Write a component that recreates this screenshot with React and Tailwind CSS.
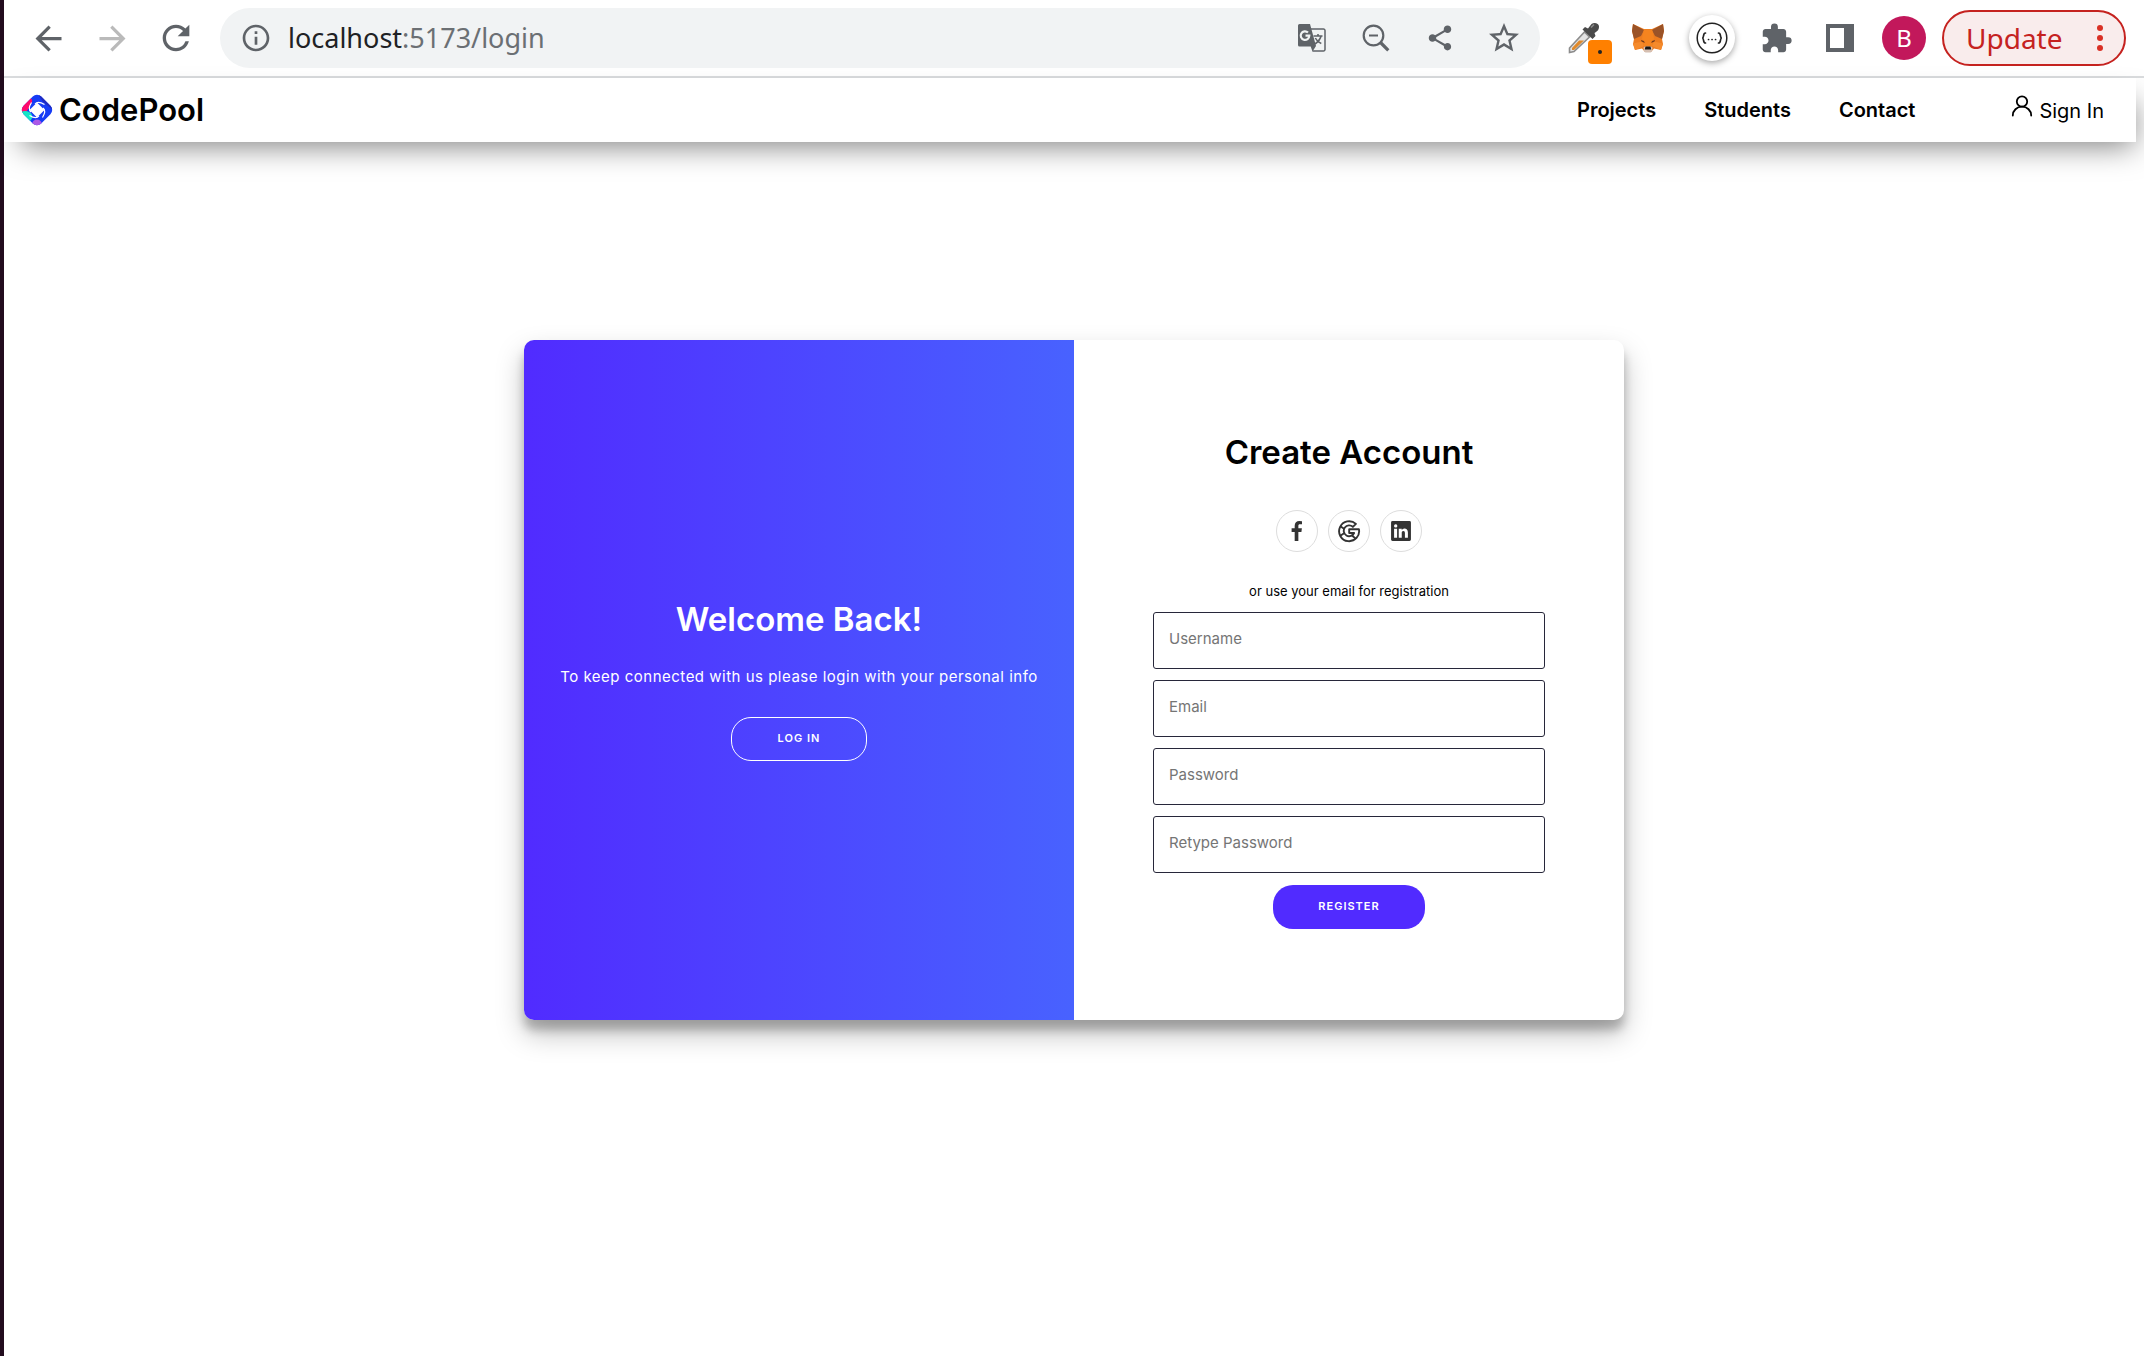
import React from "react";
import {
  MdArrowBack,
  MdArrowForward,
  MdRefresh,
  MdInfoOutline,
  MdShare,
  MdStarBorder,
  MdExtension,
} from "react-icons/md";

function ToolButton({ label, className = "text-[#5f6368]", children }) {
  return (
    <button type="button" aria-label={label} className={`flex h-[60px] w-16 shrink-0 items-center justify-center ${className}`}>
      {children}
    </button>
  );
}

function TranslateIcon() {
  return (
    <svg width="30" height="30" viewBox="0 0 30 30" fill="none">
      <path d="M13 6H26.500a1.500 1.500 0 0 1 1.500 1.500V26.500a1.500 1.500 0 0 1-1.500 1.500H15.500" stroke="#5f6368" strokeWidth="1.500" />
      <path d="M16.500 13h9M21 11v2M24 13c-.6 3-3 5.800-6 8M18.300 15c1.200 2.500 3.500 4.500 6 5.500" stroke="#5f6368" strokeWidth="1.600" />
      <path d="M2.500 1H13l6 22-3.500 5.500-1.800-5H2.500A1.500 1.500 0 0 1 1 22V2.500A1.500 1.500 0 0 1 2.500 1Z" fill="#5f6368" />
      <path d="M11 9.500A4.300 4.300 0 1 0 12.300 12.700H8.500" stroke="#f1f3f4" strokeWidth="2.200" />
    </svg>
  );
}

function ZoomOutIcon() {
  return (
    <svg width="28" height="28" viewBox="0 0 28 28" fill="none" stroke="#5f6368">
      <circle cx="11.500" cy="11.500" r="9.800" strokeWidth="2.200" />
      <path d="M7 11.500h9" strokeWidth="2" />
      <path d="M18.500 18.500 26.300 26.300" strokeWidth="3.200" />
    </svg>
  );
}

function EyedropperIcon() {
  return (
    <svg width="32" height="32" viewBox="0 0 32 32" fill="none">
      <path d="M1.500 30.500V26L16.500 10l5 5L6 29.500l-4.500 1Z" fill="#e2e2e2" stroke="#8c8c8c" strokeWidth="1.600" />
      <path d="M4 28v-2L11 18.500h5L6 28H4Z" fill="#e08a2c" />
      <path d="M14.500 7.500 17 5l3 1.500L23.500 2C26 0 31 1 31 4.500c0 3-1 4.500-4.500 6.500l1 3-3 3-10-9.500Z" fill="#4a4a4a" />
      <path d="M23 5.500 26 2.500" stroke="#8a8a8a" strokeWidth="1.500" />
    </svg>
  );
}

function FoxIcon() {
  return (
    <svg width="32" height="30" viewBox="0 0 32 30">
      <path d="M1 1l11 5h8l11-5 1 7-2 8 1 5-2 6-7-1.500-3 3.500h-6l-3-3.500L3 27l-2-6 1-5L0 8l1-7Z" fill="#ec7c20" />
      <path d="M1 1l11 6-3 6-7 3-2-8 1-7ZM31 1 20 7l3 6 7 3 2-8-1-7Z" fill="#9a5328" />
      <path d="M12 6.500h8l2 9-3 10h-6l-3-10 2-9Z" fill="#f5841f" />
      <path d="M1 20.500l9-2 2 4.500-9 4-2-6.500ZM31 20.500l-9-2-2 4.500 9 4 2-6.500Z" fill="#f58a2b" />
      <path d="M9 17l3 1 .8 2-3.300-1.500L9 17ZM23 17l-3 1-.8 2 3.300-1.500.5-1.500Z" fill="#713a1d" />
      <path d="M11.500 24.500l1.500-1h6l1.500 1-.5 4-1.500 1h-5l-1.500-1-.5-4Z" fill="#d5bfb2" />
      <path d="M13.500 23.500h5l.7 3h-6.400l.7-3Z" fill="#1c1714" />
    </svg>
  );
}

function BracesIcon() {
  return (
    <svg width="32" height="32" viewBox="0 0 32 32" fill="none" stroke="#222" strokeLinecap="round">
      <circle cx="16" cy="16" r="14.800" strokeWidth="1.500" />
      <path d="M9.500 11c-3 0-1 4.500-3.200 5 2.200.5.200 5 3.200 5M22.500 11c3 0 1 4.500 3.200 5-2.200.5-.2 5-3.200 5" strokeWidth="1.700" />
      <path d="M12.500 17.500h.1M16 17.500h.1M19.500 17.500h.1" strokeWidth="1.700" />
    </svg>
  );
}

function LogoIcon() {
  return (
    <svg width="32" height="32" viewBox="0 0 32 32">
      <defs>
        <clipPath id="logo-diamond">
          <rect x="3.500" y="3.500" width="25" height="25" rx="6" transform="rotate(45 16 16)" />
        </clipPath>
      </defs>
      <g clipPath="url(#logo-diamond)">
        <rect width="32" height="32" fill="#163cf5" />
        <path d="M19 0l13 13v3L22 8l-4-6 1-2Z" fill="#1f2bc0" />
        <path d="M5 4c4-1 7 1 6 4s-3 4-3 6l-3 4H0V8l5-4Z" fill="#ff0a6c" />
        <path d="M0 18c4-2 9-1 11 3 1 3-1 5-3 7L0 20v-2Z" fill="#14e6c6" />
        <circle cx="16" cy="30.500" r="5" fill="#ab58e6" />
        <path d="M16 8.500 23.500 16 16 23.500 8.500 16 16 8.500Z" fill="#fff" />
        <path d="M14 10c2-2.500 5.500-2 9.500.5M22 14c2.500 2 2 5.500-.5 9.500M18 22c-2 2.500-5.500 2-9.500-.5M10 18c-2.500-2-2-5.500.5-9.500" fill="none" stroke="#fff" strokeWidth="1.200" />
      </g>
    </svg>
  );
}

function UserIcon() {
  return (
    <svg width="22" height="22" viewBox="0 0 22 22" fill="none" stroke="#000" strokeWidth="1.800" strokeLinecap="round">
      <circle cx="11" cy="6.500" r="5.200" />
      <path d="M1.800 20.500c0-5 4-8.800 9.200-8.800s9.200 3.800 9.200 8.800" />
    </svg>
  );
}

function FacebookIcon() {
  return (
    <svg width="24" height="24" viewBox="0 0 24 24" fill="#333">
      <path d="M15.120 5.320H17V2.140A26.110 26.110 0 0 0 14.260 2c-2.720 0-4.580 1.660-4.580 4.700v2.620H6.610v3.560h3.070V22h3.680v-9.120h3.060l.46-3.560h-3.520V7.050c0-1.050.28-1.730 1.760-1.730Z" />
    </svg>
  );
}

function GoogleIcon() {
  return (
    <svg width="24" height="24" viewBox="0 0 24 24" fill="none" stroke="#333" strokeWidth="1.900" strokeLinejoin="round">
      <path d="M18.900 4.900A10 10 0 1 0 21.900 10.200H12.200V14h4.900A5.400 5.400 0 1 1 15.900 7.900Z" />
      <path d="M3.300 7.200l3.800 2.600M3.300 16.800l3.800-2.600M15 16.600l3.500 2.800" />
    </svg>
  );
}

function LinkedinIcon() {
  return (
    <svg width="24" height="24" viewBox="0 0 24 24" fill="#333">
      <path d="M20.470 2H3.530A1.450 1.450 0 0 0 2.060 3.430v17.140A1.450 1.450 0 0 0 3.530 22h16.940a1.450 1.450 0 0 0 1.470-1.430V3.430A1.450 1.450 0 0 0 20.470 2ZM8.090 18.740h-3v-9h3ZM6.590 8.480a1.560 1.560 0 1 1 0-3.120 1.570 1.570 0 1 1 0 3.120ZM18.910 18.740h-3v-4.830c0-1.210-.43-2-1.520-2A1.650 1.650 0 0 0 12.850 13a2 2 0 0 0-.1.730v5h-3v-9h3V11a3 3 0 0 1 2.710-1.500c2 0 3.450 1.290 3.450 4.060Z" />
    </svg>
  );
}

function BrowserToolbar() {
  return (
    <header className="flex h-[78px] items-center border-b-2 border-[#dadcde] bg-white pl-3 pr-[18px] font-['Noto_Sans','Open_Sans',sans-serif]">
      <ToolButton label="Back"><MdArrowBack size={39} /></ToolButton>
      <ToolButton label="Forward" className="text-[#bababa]"><MdArrowForward size={39} /></ToolButton>
      <ToolButton label="Reload"><MdRefresh size={40} /></ToolButton>
      <div className="mx-3 flex h-[60px] min-w-0 flex-1 items-center rounded-full bg-[#f1f3f4] pl-5 pr-1">
        <MdInfoOutline size={32} className="shrink-0 text-[#5f6368]" />
        <div className="ml-4 flex-1 text-[27px] text-[#202124]">
          localhost<span className="text-[#6b6f73]">:5173/login</span>
        </div>
        <ToolButton label="Translate"><TranslateIcon /></ToolButton>
        <ToolButton label="Zoom"><ZoomOutIcon /></ToolButton>
        <ToolButton label="Share"><MdShare size={30} /></ToolButton>
        <ToolButton label="Bookmark"><MdStarBorder size={36} /></ToolButton>
      </div>
      <ToolButton label="Color picker" className="relative">
        <EyedropperIcon />
        <span className="absolute bottom-1 right-1 flex size-6 items-center justify-center rounded bg-[#ff8000]">
          <span className="size-1 rounded-full bg-[#222]" />
        </span>
      </ToolButton>
      <ToolButton label="Wallet"><FoxIcon /></ToolButton>
      <ToolButton label="API client">
        <span className="flex size-[46px] items-center justify-center rounded-full bg-white shadow-[0_2px_6px_rgba(0,0,0,0.35)]">
          <BracesIcon />
        </span>
      </ToolButton>
      <ToolButton label="Extensions"><MdExtension size={33} /></ToolButton>
      <ToolButton label="Side panel">
        <span className="size-7 border-4 border-r-[10px] border-[#5f6368]" />
      </ToolButton>
      <ToolButton label="Profile">
        <span className="flex size-11 items-center justify-center rounded-full bg-[#c2185b] text-2xl text-white">B</span>
      </ToolButton>
      <button type="button" className="ml-1.5 flex h-14 w-[184px] shrink-0 items-center justify-between rounded-full border-2 border-[#c5221f] bg-[#f9ecec] pl-[22px] pr-[21px] text-[28px] text-[#c5221f]">
        Update
        <span className="flex flex-col gap-1">
          <span className="size-1.5 rounded-full bg-[#d93025]" />
          <span className="size-1.5 rounded-full bg-[#d93025]" />
          <span className="size-1.5 rounded-full bg-[#d93025]" />
        </span>
      </button>
    </header>
  );
}

function SiteNav() {
  return (
    <nav className="mr-2 flex h-16 items-center bg-white pl-[17px] pr-8 text-black shadow-[8px_14px_30px_-10px_rgba(0,0,0,0.5)]">
      <a href="#home" className="flex items-center gap-1.5 text-[31px] leading-10 font-semibold">
        <LogoIcon />
        CodePool
      </a>
      <div className="ml-auto flex items-center gap-12 text-xl font-semibold">
        <a href="#projects">Projects</a>
        <a href="#students">Students</a>
        <a href="#contact">Contact</a>
      </div>
      <a href="#signin" className="ml-24 flex items-end gap-1.5 text-xl">
        <span className="pb-2"><UserIcon /></span>
        Sign In
      </a>
    </nav>
  );
}

const fields = [
  { id: "username", label: "Username", type: "text" },
  { id: "email", label: "Email", type: "email" },
  { id: "password", label: "Password", type: "password" },
  { id: "retype", label: "Retype Password", type: "password" },
];

const socials = [
  { label: "Facebook", Icon: FacebookIcon },
  { label: "Google", Icon: GoogleIcon },
  { label: "LinkedIn", Icon: LinkedinIcon },
];

function AuthCard() {
  return (
    <main className="mx-auto mt-[198px] grid min-h-[680px] w-full max-w-[1100px] grid-cols-2 overflow-hidden rounded-[10px] bg-white shadow-[0_14px_28px_rgba(0,0,0,0.25),0_10px_10px_rgba(0,0,0,0.22)]">
      <section className="flex flex-col items-center justify-center bg-linear-to-r/srgb from-[#512bff] to-[#4862ff] px-8 text-center text-white">
        <h1 className="text-[33px] leading-10 font-semibold">Welcome Back!</h1>
        <p className="mt-7 mb-[30px] text-[15px] leading-5 tracking-[0.5px]">To keep connected with us please login with your personal info</p>
        <button type="button" className="h-11 w-[136px] rounded-[20px] border border-white pb-0.5 text-[11px] font-semibold tracking-[1px]">LOG IN</button>
      </section>
      <form className="flex flex-col items-center px-[79px] pt-[92px] text-black">
        <h1 className="text-[33px] leading-10 font-semibold">Create Account</h1>
        <div className="mt-[38px] flex gap-2.5">
          {socials.map(({ label, Icon }) => (
            <a key={label} href="#social" aria-label={label} className="flex size-[42px] items-center justify-center rounded-full border border-[#ddd]">
              <Icon />
            </a>
          ))}
        </div>
        <p className="mt-[31px] text-[13px] leading-4">or use your email for registration</p>
        <div className="mt-[13px] flex w-full flex-col gap-[11px]">
          {fields.map((f) => (
            <input
              key={f.id}
              id={f.id}
              type={f.type}
              aria-label={f.label}
              placeholder={f.label}
              className="h-[57px] w-full rounded-[3px] border border-[#27273a] px-[15px] pb-1 text-[15px] placeholder:text-[#757575]"
            />
          ))}
        </div>
        <button type="submit" className="mt-3 h-11 w-[152px] rounded-[20px] bg-[#512bff] pb-0.5 text-[11px] font-semibold tracking-[1px] text-white">REGISTER</button>
      </form>
    </main>
  );
}

export default function App() {
  return (
    <div className="min-h-screen border-l-4 border-[#220c1e] bg-white font-['Inter',sans-serif]">
      <BrowserToolbar />
      <SiteNav />
      <AuthCard />
    </div>
  );
}
